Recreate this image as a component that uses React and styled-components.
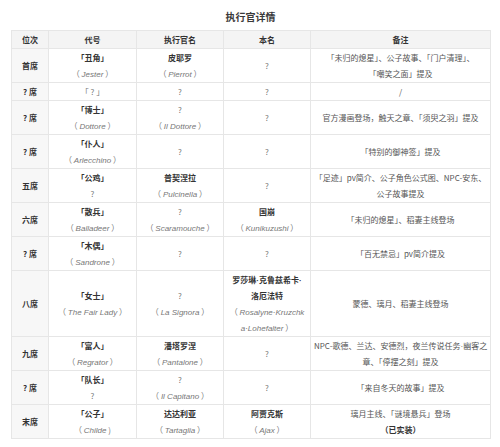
import React from "react";
import styled, { createGlobalStyle } from "styled-components";

const GlobalStyle = createGlobalStyle`
  body {
    margin: 0;
    background: #fff;
    font-family: "Noto Sans CJK SC", "Noto Sans", sans-serif;
  }
`;

const Page = styled.div`
  width: 500px;
  padding: 9px 0 0 11px;
  box-sizing: border-box;
`;

const Title = styled.div`
  width: 479px;
  text-align: center;
  font-size: 10px;
  line-height: 16px;
  font-weight: bold;
  color: #3a3a3a;
  margin-bottom: 5px;
`;

const Table = styled.table`
  width: 479px;
  border-collapse: collapse;
  table-layout: fixed;
  font-size: 8px;
  line-height: 16px;
  color: #555;
`;

const Head = styled.th`
  background: #f4f4f4;
  border: 1px solid #e6e6e6;
  padding: 0 3px;
  height: 17px;
  font-weight: bold;
  color: #333;
  text-align: center;
`;

const Pos = styled.td`
  background: #f7f7f7;
  border: 1px solid #e6e6e6;
  padding: 1px 3px 0;
  font-weight: bold;
  color: #333;
  text-align: center;
`;

const Cell = styled.td`
  border: 1px solid #e6e6e6;
  padding: 1px 3px 0;
  text-align: center;
  vertical-align: middle;
  word-break: break-all;
`;

const Name = styled.div`
  font-weight: bold;
  color: #333;
`;

const Plain = styled.div`
  color: #777;
`;

const Latin = styled.div`
  color: #777;
  em {
    font-family: "Liberation Sans", Arial, sans-serif;
    font-style: italic;
    line-height: 1;
  }
`;

// narrow middle dot, as the Latin font draws it
const Dot = styled.span`
  font-family: "Liberation Sans", Arial, sans-serif;
  line-height: 1;
`;

const Note = styled.div`
  color: #555;
  white-space: nowrap;
`;

const Strong = styled.div`
  font-weight: bold;
  color: #333;
`;

const L = ({ children, end = "）" }) => (
  <Latin>
    （ <em>{children}</em> {end}
  </Latin>
);

const rows = [
  {
    pos: "首席",
    code: <><Name>「丑角」</Name><L>Jester</L></>,
    exec: <><Name>皮耶罗</Name><L>Pierrot</L></>,
    real: <Plain>?</Plain>,
    note: <Note>「未归的熄星」、公子故事、「门户清理」、<br />「嘲笑之面」提及</Note>,
  },
  {
    pos: "? 席",
    code: <Plain>「 ? 」</Plain>,
    exec: <Plain>?</Plain>,
    real: <Plain>?</Plain>,
    note: <Note>/</Note>,
  },
  {
    pos: "? 席",
    code: <><Name>「博士」</Name><L>Dottore</L></>,
    exec: <><Plain>?</Plain><L>Il Dottore</L></>,
    real: <Plain>?</Plain>,
    note: <Note>官方漫画登场，触天之章、「须臾之羽」提及</Note>,
  },
  {
    pos: "? 席",
    code: <><Name>「仆人」</Name><L>Arlecchino</L></>,
    exec: <Plain>?</Plain>,
    real: <Plain>?</Plain>,
    note: <Note>「特别的御神签」提及</Note>,
  },
  {
    pos: "五席",
    code: <><Name>「公鸡」</Name><Plain>?</Plain></>,
    exec: <><Name>普契涅拉</Name><L>Pulcinella</L></>,
    real: <Plain>?</Plain>,
    note: <Note>「足迹」pv简介、公子角色公式图、NPC-安东、<br />公子故事提及</Note>,
  },
  {
    pos: "六席",
    code: <><Name>「散兵」</Name><L>Balladeer</L></>,
    exec: <><Plain>?</Plain><L>Scaramouche</L></>,
    real: <><Name>国崩</Name><L>Kunikuzushi</L></>,
    note: <Note>「未归的熄星」、稻妻主线登场</Note>,
  },
  {
    pos: "? 席",
    code: <><Name>「木偶」</Name><L>Sandrone</L></>,
    exec: <Plain>?</Plain>,
    real: <Plain>?</Plain>,
    note: <Note>「百无禁忌」pv简介提及</Note>,
  },
  {
    pos: "八席",
    code: <><Name>「女士」</Name><L>The Fair Lady</L></>,
    exec: <><Plain>?</Plain><L>La Signora</L></>,
    real: (
      <>
        <Name>罗莎琳<Dot>·</Dot>克鲁兹希卡<Dot>·</Dot><br />洛厄法特</Name>
        <Latin>
          （ <em>Rosalyne·Kruzchk</em><br /><em>a·Lohefalter</em> ）
        </Latin>
      </>
    ),
    note: <Note>蒙德、璃月、稻妻主线登场</Note>,
  },
  {
    pos: "九席",
    code: <><Name>「富人」</Name><L>Regrator</L></>,
    exec: <><Name>潘塔罗涅</Name><L>Pantalone</L></>,
    real: <Plain>?</Plain>,
    note: <Note>NPC-歌德、兰达、安德烈，夜兰传说任务<Dot>·</Dot>幽客之<br />章、「停摆之刻」提及</Note>,
  },
  {
    pos: "? 席",
    code: <><Name>「队长」</Name><Plain>?</Plain></>,
    exec: <><Plain>?</Plain><L>Il Capitano</L></>,
    real: <Plain>?</Plain>,
    note: <Note>「来自冬天的故事」提及</Note>,
  },
  {
    pos: "末席",
    code: <><Name>「公子」</Name><L end=")">Childe</L></>,
    exec: <><Name>达达利亚</Name><L>Tartaglia</L></>,
    real: <><Name>阿贾克斯</Name><L>Ajax</L></>,
    note: <><Note>璃月主线、「谜境悬兵」登场</Note><Strong>（已实装）</Strong></>,
  },
];

const App = () => {
  return (
    <>
      <GlobalStyle />
      <Page>
        <Title>执行官详情</Title>
        <Table>
          <colgroup>
            <col style={{ width: 37 }} />
            <col style={{ width: 88 }} />
            <col style={{ width: 87 }} />
            <col style={{ width: 87 }} />
            <col style={{ width: 180 }} />
          </colgroup>
          <thead>
            <tr>
              <Head>位次</Head>
              <Head>代号</Head>
              <Head>执行官名</Head>
              <Head>本名</Head>
              <Head>备注</Head>
            </tr>
          </thead>
          <tbody>
            {rows.map((r, i) => (
              <tr key={i}>
                <Pos>{r.pos}</Pos>
                <Cell>{r.code}</Cell>
                <Cell>{r.exec}</Cell>
                <Cell>{r.real}</Cell>
                <Cell>{r.note}</Cell>
              </tr>
            ))}
          </tbody>
        </Table>
      </Page>
    </>
  );
};

export default App;
